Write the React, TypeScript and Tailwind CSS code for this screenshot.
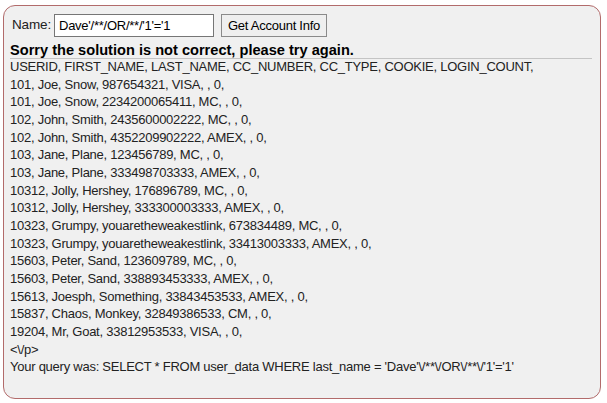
import React from "react";

const rows = [
  "101, Joe, Snow, 987654321, VISA, , 0,",
  "101, Joe, Snow, 2234200065411, MC, , 0,",
  "102, John, Smith, 2435600002222, MC, , 0,",
  "102, John, Smith, 4352209902222, AMEX, , 0,",
  "103, Jane, Plane, 123456789, MC, , 0,",
  "103, Jane, Plane, 333498703333, AMEX, , 0,",
  "10312, Jolly, Hershey, 176896789, MC, , 0,",
  "10312, Jolly, Hershey, 333300003333, AMEX, , 0,",
  "10323, Grumpy, youaretheweakestlink, 673834489, MC, , 0,",
  "10323, Grumpy, youaretheweakestlink, 33413003333, AMEX, , 0,",
  "15603, Peter, Sand, 123609789, MC, , 0,",
  "15603, Peter, Sand, 338893453333, AMEX, , 0,",
  "15613, Joesph, Something, 33843453533, AMEX, , 0,",
  "15837, Chaos, Monkey, 32849386533, CM, , 0,",
  "19204, Mr, Goat, 33812953533, VISA, , 0,",
];

export default function App() {
  return (
    <div
      className="w-[607px] h-[403px] bg-white pt-[5px] pl-[3px]"
      style={{ fontFamily: '"Liberation Sans", Arial, sans-serif' }}
    >
      <div className="w-[598px] h-[394px] border border-[#b26b6b] rounded-[12px] bg-[#f0f0f0] pl-[6px] pr-[6px] pt-[8px] text-[#222] text-[13px] tracking-[-0.25px]">
        <div className="flex items-center h-[23px]">
          <span className="ml-[2px] w-[36px] text-[13.5px] tracking-[-0.15px]">Name:</span>
          <div className="ml-[6px] w-[160px] h-[23px] bg-white border border-[#767676] flex items-center pl-[4px] text-[13px] text-black">
            Dave'/**/OR/**/'1'='1
          </div>
          <div className="ml-[7px] w-[106px] h-[23px] bg-[#efefef] border border-[#8a8a8a] flex items-center justify-center text-[13px] text-black">
            Get Account Info
          </div>
        </div>
        <div className="mt-[5px] font-bold text-[14.6px] tracking-normal leading-[16px] text-black">
          Sorry the solution is not correct, please try again.
        </div>
        <div className="h-px bg-[#c4c4c4] mr-[2px] mt-[0px]" />
        <div className="leading-[17.66px] mt-[-1px]">
          <div>USERID, FIRST_NAME, LAST_NAME, CC_NUMBER, CC_TYPE, COOKIE, LOGIN_COUNT,</div>
          {rows.map((r, i) => (
            <div key={i}>{r}</div>
          ))}
          <div>&lt;\/p&gt;</div>
          <div>Your query was: SELECT * FROM user_data WHERE last_name = 'Dave'\/**\/OR\/**\/'1'='1'</div>
        </div>
      </div>
    </div>
  );
}
